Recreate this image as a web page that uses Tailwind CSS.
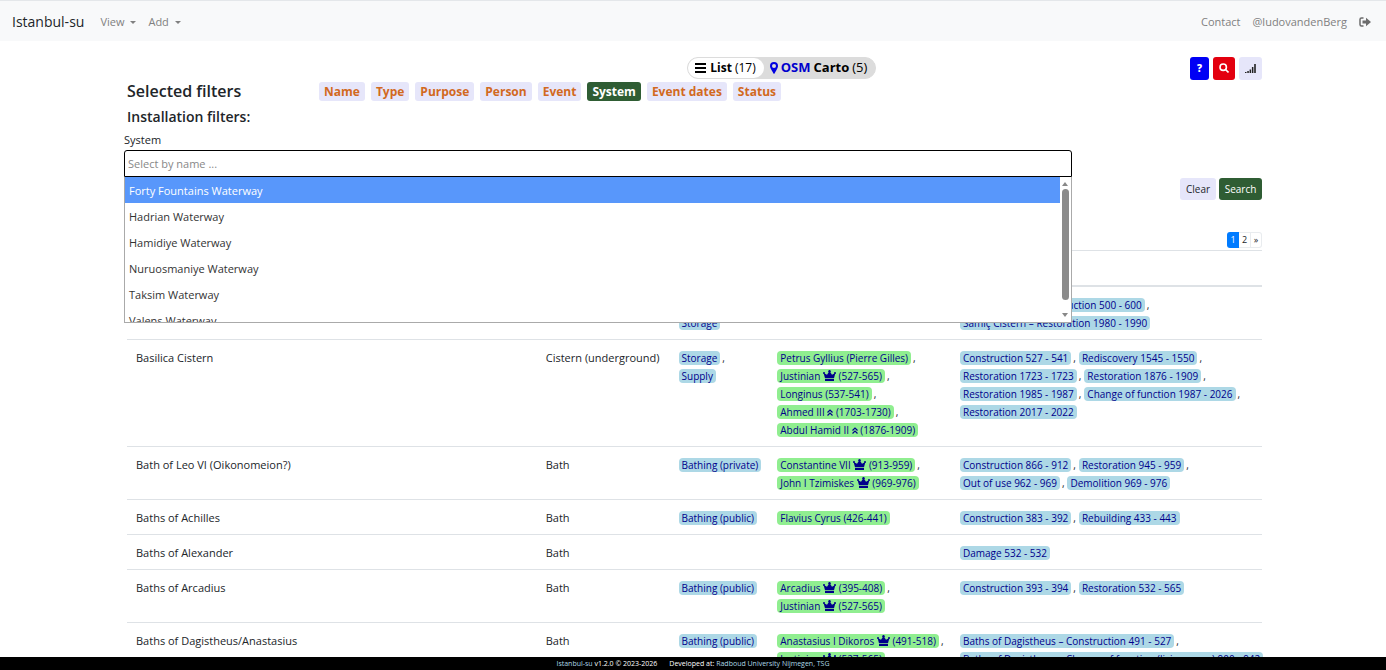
<!DOCTYPE html>
<html lang="en">
  <head>
    <meta charset="UTF-8" />
    <meta name="viewport" content="width=device-width, initial-scale=1.0" />
    <title>Istanbul-su</title>
    <script src="https://cdn.jsdelivr.net/npm/@tailwindcss/browser@4"></script>
    <style>
      body {
        font-family: "Open Sans", "Noto Sans", sans-serif;
      }
    </style>
  </head>
  <body class="h-screen flex flex-col overflow-hidden bg-white text-[#212529] text-[11px]">
    <!-- icons -->
    <svg class="hidden">
      <symbol id="crown" viewBox="0 0 13 11"><path d="M.6 3 4 4.800 6.500 1 9 4.800 12.400 3 11 8.300H2ZM2 9h9v2H2Z" /><circle cx="1" cy="3" r="1" /><circle cx="12" cy="3" r="1" /><circle cx="6.500" cy="1.200" r="1.200" /></symbol>
      <symbol id="up" viewBox="0 0 6 7"><path d="M.5 3.500 3 1l2.500 2.500M.5 6.500 3 4l2.500 2.500" fill="none" stroke="currentColor" stroke-width="1.200" /></symbol>
    </svg>

    <nav class="h-[41px] shrink-0 flex items-center justify-between bg-[#f8f9fa] border-t border-[#e4e7ea] px-3 pt-[2px] text-[#808080]">
      <div class="flex items-center">
        <a href="#" class="text-sm text-[#212529] mr-4">Istanbul-su</a>
        <button class="flex items-center gap-[6px] mr-3">View <span class="border-x-3 border-x-transparent border-t-3 border-t-[#808080]"></span></button>
        <button class="flex items-center gap-[6px]">Add <span class="border-x-3 border-x-transparent border-t-3 border-t-[#808080]"></span></button>
      </div>
      <div class="flex items-center gap-3 pr-[3px]">
        <a href="#">Contact</a>
        <a href="#">@ludovandenBerg</a>
        <a href="#" aria-label="Log out">
          <svg class="w-3 h-[10px]" viewBox="0 0 12 10" fill="#6c6c6c"><path d="M4.500 1H2.500Q1 1 1 2.500v5Q1 9 2.500 9h2" fill="none" stroke="#6c6c6c" stroke-width="1.500" /><path d="M3.500 3.500H7V.8L12 5 7 9.200V6.500H3.500Z" /></svg>
        </a>
      </div>
    </nav>

    <main class="flex-1 min-h-0 overflow-y-auto [scrollbar-width:none]">
      <div class="max-w-[1138px] mx-auto pt-[15px]">
        <div class="flex items-center justify-between pl-[49.5%] h-6">
          <div class="flex items-center h-[22px] bg-[#dcdcdc] rounded-full border border-[#dcdcdc] text-xs text-black">
            <button class="flex items-center h-5 bg-white rounded-full pl-[7px] pr-2">
              <svg class="w-[11px] h-[10px] mr-1" viewBox="0 0 11 10"><path d="M0 1h11M0 5h11M0 9h11" stroke="#000" stroke-width="2" /></svg>
              <b class="mr-[3px]">List</b>(17)
            </button>
            <button class="flex items-center pl-[6px] pr-2 text-[13px]">
              <svg class="w-2 h-3 mr-[3px]" viewBox="0 0 8 12"><path fill-rule="evenodd" fill="#0000e0" d="M4 0a4 4 0 0 1 4 4c0 1.400-.8 2.600-1.500 3.900L4.500 11.600q-.5.8-1 0L1.500 7.900C.8 6.600 0 5.400 0 4a4 4 0 0 1 4-4Zm0 2a2 2 0 1 0 0 4 2 2 0 0 0 0-4Z" /></svg>
              <b class="text-[#0000cd] mr-[3px]">OSM</b><b class="mr-[3px]">Carto</b>(5)
            </button>
          </div>
          <div class="flex gap-1">
            <button class="w-[19px] h-[23px] rounded-[3px] bg-[#0000f5] text-white text-[10px] font-extrabold">?</button>
            <button aria-label="Search" class="w-[22px] h-[23px] rounded-[3px] bg-[#e3000f] flex items-center justify-center">
              <svg class="w-[10px] h-[10px]" viewBox="0 0 10 10" fill="none" stroke="#fff" stroke-width="1.600"><circle cx="4.200" cy="4.200" r="3.200" /><path d="m6.500 6.500 3 3" /></svg>
            </button>
            <button aria-label="Chart" class="w-[23px] h-[23px] rounded-[3px] bg-[#e6e6fa] flex items-center justify-center">
              <svg class="w-[11px] h-[9px]" viewBox="0 0 11 9" fill="#222"><path d="M0 8h1.500v1H0zM2.300 7h1.500v2H2.300zM4.600 5.500h1.500V9H4.600zM6.900 3h1.500v6H6.900zM9.200 0h1.600v9H9.200z" /></svg>
            </button>
          </div>
        </div>

        <div class="flex items-center h-[22px]">
          <h3 class="w-[195px] pl-[3px] text-base font-semibold">Selected filters</h3>
          <div id="filters" class="flex gap-[6px] text-xs font-bold"></div>
        </div>
        <h4 class="pl-[3px] mt-1 text-sm leading-[22px] font-semibold">Installation filters:</h4>

        <div class="flex justify-between items-end mt-[3px]">
          <div class="relative w-[83.300%]">
            <label for="system" class="block h-[19px] leading-[18px]">System</label>
            <input id="system" type="text" placeholder="Select by name ..." class="block w-full h-[27px] border border-black rounded-t-[3px] px-[3px] outline-none placeholder:text-[#888]" />
            <div class="absolute z-10 top-full inset-x-0 h-[146px] flex border border-t-0 border-[#aaa] bg-white overflow-hidden">
              <ul id="systems" role="listbox" class="flex-1"></ul>
              <div class="w-[11px] flex flex-col items-center justify-between py-[5px]">
                <span class="border-x-3 border-x-transparent border-b-4 border-b-[#888]"></span>
                <span class="w-[7px] h-[111px] rounded-full bg-[#8b8b8b] mb-auto mt-[3px]"></span>
                <span class="border-x-3 border-x-transparent border-t-4 border-t-[#888]"></span>
              </div>
            </div>
          </div>
          <div class="flex gap-[3px] -mb-[23px] text-[10px]">
            <button class="w-9 h-[22px] rounded-[3px] bg-[#e6e6fa]">Clear</button>
            <button class="w-[43px] h-[22px] rounded-[3px] bg-[#2f5d34] text-white">Search</button>
          </div>
        </div>

        <div class="flex justify-end mt-[55px] mb-[2px] text-[9px]">
          <a href="#" class="w-3 h-4 leading-4 text-center rounded-l-[3px] bg-[#007bff] text-white">1</a>
          <a href="#" class="w-3 h-4 leading-[14px] text-center border-y border-r border-[#e9ecef]">2</a>
          <a href="#" class="w-[11px] h-4 leading-[14px] text-center border-y border-r border-[#e9ecef] rounded-r-[3px]">»</a>
        </div>

        <div class="pl-[3px]">
          <table class="w-full table-fixed border-collapse">
            <colgroup>
              <col class="w-[36.100%]" />
              <col class="w-[11.700%]" />
              <col class="w-[8.700%]" />
              <col class="w-[16.100%]" />
              <col />
            </colgroup>
            <thead>
              <tr class="h-[35px] border-t border-b-2 border-[#dee2e6]"><th></th><th></th><th></th><th></th><th></th></tr>
            </thead>
            <tbody id="rows"></tbody>
          </table>
        </div>
      </div>
    </main>

    <footer class="h-[13px] shrink-0 bg-black text-white text-[7px] leading-[13px] flex justify-center gap-3">
      <span><a href="#" class="text-[#add8e6]">Istanbul-su</a> v1.2.0 © 2023-2026</span>
      <span>Developed at: <a href="#" class="text-[#add8e6]">Radboud University Nijmegen, TSG</a></span>
    </footer>

    <script>
      const filters = ["Name", "Type", "Purpose", "Person", "Event", "System", "Event dates", "Status"];
      document.getElementById("filters").innerHTML = filters
        .map((name) => {
          const color = name === "System" ? "bg-[#2f5d34] text-white" : "bg-[#e6e6fa] text-[#d2691e]";
          return `<button class="h-[19px] leading-[19px] px-[5px] rounded-[3px] ${color}">${name}</button>`;
        })
        .join("");

      const systems = ["Forty Fountains", "Hadrian", "Hamidiye", "Nuruosmaniye", "Taksim", "Valens"];
      document.getElementById("systems").innerHTML = systems
        .map((name, i) => {
          const color = i === 0 ? "bg-[#5897fb] text-white" : "text-[#333]";
          return `<li role="option" class="h-[26px] leading-[28px] px-1 ${color}">${name} Waterway</li>`;
        })
        .join("");

      // every inner array is one line of badges in the cell
      const rows = [
        ["", "", [[], ["Storage"]], [], [["Samiç Cistern – Construction 500 - 600"], ["Samiç Cistern – Restoration 1980 - 1990"]]],
        ["Basilica Cistern", "Cistern (underground)", [["Storage"], ["Supply"]],
          [["Petrus Gyllius (Pierre Gilles)"], ["Justinian {crown} (527-565)"], ["Longinus (537-541)"], ["Ahmed III {up} (1703-1730)"], ["Abdul Hamid II {up} (1876-1909)"]],
          [["Construction 527 - 541", "Rediscovery 1545 - 1550"], ["Restoration 1723 - 1723", "Restoration 1876 - 1909"], ["Restoration 1985 - 1987", "Change of function 1987 - 2026"], ["Restoration 2017 - 2022"]]],
        ["Bath of Leo VI (Oikonomeion?)", "Bath", [["Bathing (private)"]],
          [["Constantine VII {crown} (913-959)"], ["John I Tzimiskes {crown} (969-976)"]],
          [["Construction 866 - 912", "Restoration 945 - 959"], ["Out of use 962 - 969", "Demolition 969 - 976"]]],
        ["Baths of Achilles", "Bath", [["Bathing (public)"]], [["Flavius Cyrus (426-441)"]], [["Construction 383 - 392", "Rebuilding 433 - 443"]]],
        ["Baths of Alexander", "Bath", [], [], [["Damage 532 - 532"]]],
        ["Baths of Arcadius", "Bath", [["Bathing (public)"]], [["Arcadius {crown} (395-408)"], ["Justinian {crown} (527-565)"]], [["Construction 393 - 394", "Restoration 532 - 565"]]],
        ["Baths of Dagistheus/Anastasius", "Bath", [["Bathing (public)"]],
          [["Anastasius I Dikoros {crown} (491-518)"], ["Justinian {crown} (527-565)"]],
          [["Baths of Dagistheus – Construction 491 - 527"], ["Baths of Dagistheus – Change of function (living room) 900 - 942"]]],
      ];

      const icons = {
        "{crown}": '<svg class="inline w-[13px] h-[11px] align-[-1px]" fill="currentColor"><use href="#crown" /></svg>',
        "{up}": '<svg class="inline w-[6px] h-[7px] align-baseline"><use href="#up" /></svg>',
      };

      function renderLines(lines, color) {
        return lines
          .map((line, i) => {
            const badges = line.map((text, j) => {
              const last = i === lines.length - 1 && j === line.length - 1;
              const label = text.replace(/\{\w+\}/, (key) => icons[key]);
              return `<a href="#" class="px-[3px] rounded-[4px] text-[#00008b] ${color}">${label}</a>${last ? "" : '<span class="ml-[2px] mr-[3px]">,</span>'}`;
            });
            return `<div class="h-[18px] whitespace-nowrap">${badges.join("")}</div>`;
          })
          .join("");
      }

      document.getElementById("rows").innerHTML = rows
        .map(
          ([name, type, purposes, persons, events]) => `
            <tr class="border-b border-[#dee2e6] align-top leading-[18px]">
              <td class="pt-[9px] pb-[7px] px-[9px]">${name}</td>
              <td class="pt-[9px] pb-[7px] px-[9px]">${type}</td>
              <td class="pt-[9px] pb-[7px] px-[9px] text-[10px]">${renderLines(purposes, "bg-[#add8e6]")}</td>
              <td class="pt-[9px] pb-[7px] px-[9px] text-[10px]">${renderLines(persons, "bg-[#90ee90]")}</td>
              <td class="pt-[9px] pb-[7px] px-[9px] text-[10px]">${renderLines(events, "bg-[#add8e6]")}</td>
            </tr>`
        )
        .join("");
    </script>
  </body>
</html>
